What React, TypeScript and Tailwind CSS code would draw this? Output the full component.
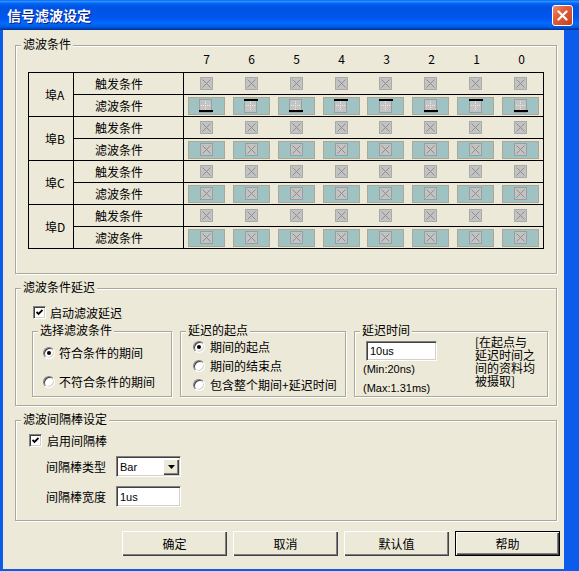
import React from 'react';

const BITS = [7, 6, 5, 4, 3, 2, 1, 0];
// where the black edge bar sits for port A filter bits (t = top, b = bottom)
const PORT_A_EDGES = ['b', 't', 'b', 't', 't', 'b', 't', 'b'];

function XIcon() {
    return (
        <svg width="13" height="13" viewBox="0 0 13 13" className="block">
            <rect x="0.5" y="0.5" width="12" height="12" fill="#C3C3C3" stroke="#7C7C7C" strokeDasharray="1 1" />
            <path d="M2.5 2.5L10.5 10.5M10.5 2.5L2.5 10.5" stroke="#8E8E8E" strokeWidth="1" />
        </svg>
    );
}

function EdgeIcon({ top }: { top: boolean }) {
    return (
        <svg width="14" height="14" viewBox="0 0 14 14" className="block">
            <rect x="0.5" y="0.5" width="12" height="13" fill="#C3C3C3" stroke="#7C7C7C" strokeDasharray="1 1" />
            <path d="M6.5 2V12M2 6.5H11" stroke="#EDEDED" strokeDasharray="1 1" />
            <rect x="0" y={top ? 0 : 11} width="14" height="2" fill="#000" />
        </svg>
    );
}

function GroupBox({ label, className, children }: { label: string; className: string; children?: React.ReactNode }) {
    return (
        <div className={`relative border border-[#ACA899] shadow-[inset_1px_1px_0_#fff,1px_1px_0_#fff] ${className}`}>
            <span className="absolute -top-[9px] left-[5px] bg-[#ECE9D8] px-[2px] leading-[14px] whitespace-nowrap">{label}</span>
            {children}
        </div>
    );
}

function Check() {
    return (
        <span className="w-[13px] h-[13px] shrink-0 bg-white border border-t-[#808080] border-l-[#808080] border-b-white border-r-white shadow-[inset_1px_1px_0_#404040,inset_-1px_-1px_0_#D4D0C8] flex items-center justify-center">
            <svg width="7" height="7" viewBox="0 0 7 7" className="block">
                <path d="M0.5 3L2.5 5L6.5 1" stroke="#000" strokeWidth="1.8" fill="none" />
            </svg>
        </span>
    );
}

function Radio({ on }: { on?: boolean }) {
    return (
        <span className="w-[12px] h-[12px] shrink-0 rounded-full bg-white border border-t-[#808080] border-l-[#808080] border-b-white border-r-white shadow-[inset_1px_1px_0_#404040,inset_-1px_-1px_0_#D4D0C8] flex items-center justify-center">
            {on && <span className="w-[4px] h-[4px] rounded-full bg-black" />}
        </span>
    );
}

function Btn({ label, main }: { label: string; main?: boolean }) {
    return (
        <button
            type="button"
            className={`w-[105px] h-[25px] bg-[#ECE9D8] flex items-center justify-center leading-[14px] text-[12px] shadow-[inset_1px_1px_0_#fff,inset_-1px_-1px_0_#404040,inset_-2px_-2px_0_#808080] ${main ? 'border border-black' : ''}`}
        >
            {label}
        </button>
    );
}

function PortBlock({ name, edges }: { name: string; edges?: string[] }) {
    return (
        <div className="flex border-b border-black">
            <div className="w-[45px] border-r border-black flex items-center pl-[16px] leading-[14px]">{name}</div>
            <div className="flex-1 flex flex-col">
                <div className="flex h-[22px] border-b border-black">
                    <div className="w-[110px] border-r border-black flex items-center pl-[21px] leading-[14px]">触发条件</div>
                    {BITS.map((b) => (
                        <div key={b} className="flex-1 flex items-center justify-center">
                            <XIcon />
                        </div>
                    ))}
                </div>
                <div className="flex h-[21px]">
                    <div className="w-[110px] border-r border-black flex items-center pl-[21px] leading-[14px]">滤波条件</div>
                    {BITS.map((b, i) => (
                        <div key={b} className="flex-1 flex items-center justify-center">
                            <div className="w-[37px] h-[18px] bg-[#9FC2C2] border border-[#ACA893] flex items-center justify-center">
                                {edges ? <EdgeIcon top={edges[i] === 't'} /> : <XIcon />}
                            </div>
                        </div>
                    ))}
                </div>
            </div>
        </div>
    );
}

export default function App() {
    return (
        <div className="w-[579px] h-[571px] bg-[#0B5CEB] flex flex-col text-[12px] text-black font-['Noto_Sans_CJK_SC',sans-serif] select-none">
            {/* title bar */}
            <div className="h-[30px] shrink-0 flex items-center justify-between pl-[7px] pr-[6px] bg-[linear-gradient(to_bottom,#0058EE_0%,#3593FF_4%,#288EFF_6%,#127DFF_8%,#036FFC_10%,#0262EE_14%,#0057E5_20%,#0054E3_24%,#0055EB_56%,#005BF5_66%,#026AFE_76%,#0062EF_86%,#0052D6_92%,#0040AB_96%,#003092_100%)]">
                <span className="text-white font-bold text-[14px] leading-[16px] [text-shadow:1px_1px_0_#0A1E8A]">信号滤波设定</span>
                <div className="w-[21px] h-[21px] rounded-[3px] border border-white bg-[linear-gradient(135deg,#F09070_0%,#E2603C_35%,#C7401D_100%)] flex items-center justify-center">
                    <svg width="11" height="11" viewBox="0 0 11 11" className="block">
                        <path d="M1.5 1.5L9.5 9.5M9.5 1.5L1.5 9.5" stroke="#fff" strokeWidth="2.2" strokeLinecap="round" />
                    </svg>
                </div>
            </div>

            {/* dialog body */}
            <div className="flex-1 ml-[3px] mr-[15px] mb-[2px] bg-[#ECE9D8] flex flex-col pl-[12px]">
                <GroupBox label="滤波条件" className="mt-[15px] w-[542px] h-[229px]">
                    <div className="flex flex-col pt-[6px] pl-[12px]">
                        <div className="flex w-[516px] h-[14px] leading-[14px]">
                            <div className="w-[156px]" />
                            {BITS.map((b) => (
                                <div key={b} className="flex-1 text-center">{b}</div>
                            ))}
                        </div>
                        <div className="mt-[6px] w-[516px] border-t border-l border-r border-black flex flex-col">
                            <PortBlock name="埠A" edges={PORT_A_EDGES} />
                            <PortBlock name="埠B" />
                            <PortBlock name="埠C" />
                            <PortBlock name="埠D" />
                        </div>
                    </div>
                </GroupBox>

                <GroupBox label="滤波条件延迟" className="mt-[14px] w-[542px] h-[118px]">
                    <div className="flex flex-col pt-[17px] pl-[16px]">
                        <div className="flex items-center gap-[4px] ml-[1px] h-[13px] leading-[14px]">
                            <Check />
                            <span>启动滤波延迟</span>
                        </div>
                        <div className="flex gap-[8px] mt-[12px]">
                            <GroupBox label="选择滤波条件" className="w-[140px] h-[66px]">
                                <div className="flex flex-col gap-[13px] pt-[13px] pl-[10px]">
                                    <div className="flex items-center gap-[4px] h-[16px] leading-[14px]">
                                        <Radio on />
                                        <span>符合条件的期间</span>
                                    </div>
                                    <div className="flex items-center gap-[4px] h-[16px] leading-[14px]">
                                        <Radio />
                                        <span>不符合条件的期间</span>
                                    </div>
                                </div>
                            </GroupBox>
                            <GroupBox label="延迟的起点" className="w-[166px] h-[66px]">
                                <div className="flex flex-col gap-[3px] pt-[7px] pl-[12px]">
                                    <div className="flex items-center gap-[5px] h-[16px] leading-[14px]">
                                        <Radio on />
                                        <span>期间的起点</span>
                                    </div>
                                    <div className="flex items-center gap-[5px] h-[16px] leading-[14px]">
                                        <Radio />
                                        <span>期间的结束点</span>
                                    </div>
                                    <div className="flex items-center gap-[5px] h-[16px] leading-[14px]">
                                        <Radio />
                                        <span className="whitespace-nowrap">包含整个期间+延迟时间</span>
                                    </div>
                                </div>
                            </GroupBox>
                            <GroupBox label="延迟时间" className="w-[194px] h-[66px]">
                                <div className="flex">
                                    <div className="w-[120px] flex flex-col pt-[9px] pl-[8px] font-['Liberation_Sans',sans-serif] text-[11px]">
                                        <div className="ml-[3px] w-[71px] h-[20px] bg-white border border-t-[#808080] border-l-[#808080] border-b-white border-r-white shadow-[inset_1px_1px_0_#404040,inset_-1px_-1px_0_#D4D0C8] flex items-center pl-[3px] leading-[14px]">
                                            10us
                                        </div>
                                        <div className="h-[14px] leading-[14px] mt-[1px]">(Min:20ns)</div>
                                        <div className="h-[14px] leading-[14px] mt-[5px]">(Max:1.31ms)</div>
                                    </div>
                                    <div className="flex flex-col pt-[3px] leading-[13px] whitespace-nowrap">
                                        <span>[在起点与</span>
                                        <span>延迟时间之</span>
                                        <span>间的资料均</span>
                                        <span>被摄取]</span>
                                    </div>
                                </div>
                            </GroupBox>
                        </div>
                    </div>
                </GroupBox>

                <GroupBox label="滤波间隔棒设定" className="mt-[14px] w-[542px] h-[101px]">
                    <div className="flex flex-col pt-[13px] pl-[13px]">
                        <div className="flex items-center gap-[5px] h-[13px] leading-[14px]">
                            <Check />
                            <span>启用间隔棒</span>
                        </div>
                        <div className="flex items-center ml-[17px] mt-[9px] h-[21px]">
                            <span className="w-[70px] leading-[14px]">间隔棒类型</span>
                            <div className="w-[65px] h-[21px] bg-white border border-t-[#808080] border-l-[#808080] border-b-white border-r-white shadow-[inset_1px_1px_0_#404040,inset_-1px_-1px_0_#D4D0C8] flex items-center pl-[3px] pr-[1px] font-['Liberation_Sans',sans-serif] text-[11px] leading-[14px]">
                                <span className="flex-1">Bar</span>
                                <span className="w-[16px] h-[16px] bg-[#ECE9D8] shadow-[inset_1px_1px_0_#fff,inset_-1px_-1px_0_#404040,inset_-2px_-2px_0_#808080] flex items-center justify-center">
                                    <svg width="7" height="4" viewBox="0 0 7 4" className="block">
                                        <path d="M0 0H7L3.5 4Z" fill="#000" />
                                    </svg>
                                </span>
                            </div>
                        </div>
                        <div className="flex items-center ml-[17px] mt-[9px] h-[21px]">
                            <span className="w-[70px] leading-[14px]">间隔棒宽度</span>
                            <div className="w-[65px] h-[21px] bg-white border border-t-[#808080] border-l-[#808080] border-b-white border-r-white shadow-[inset_1px_1px_0_#404040,inset_-1px_-1px_0_#D4D0C8] flex items-center pl-[3px] font-['Liberation_Sans',sans-serif] text-[11px] leading-[14px]">
                                1us
                            </div>
                        </div>
                    </div>
                </GroupBox>

                <div className="flex gap-[6px] mt-[10px] ml-[107px]">
                    <Btn label="确定" />
                    <Btn label="取消" />
                    <Btn label="默认值" />
                    <Btn label="帮助" main />
                </div>
            </div>
        </div>
    );
}
